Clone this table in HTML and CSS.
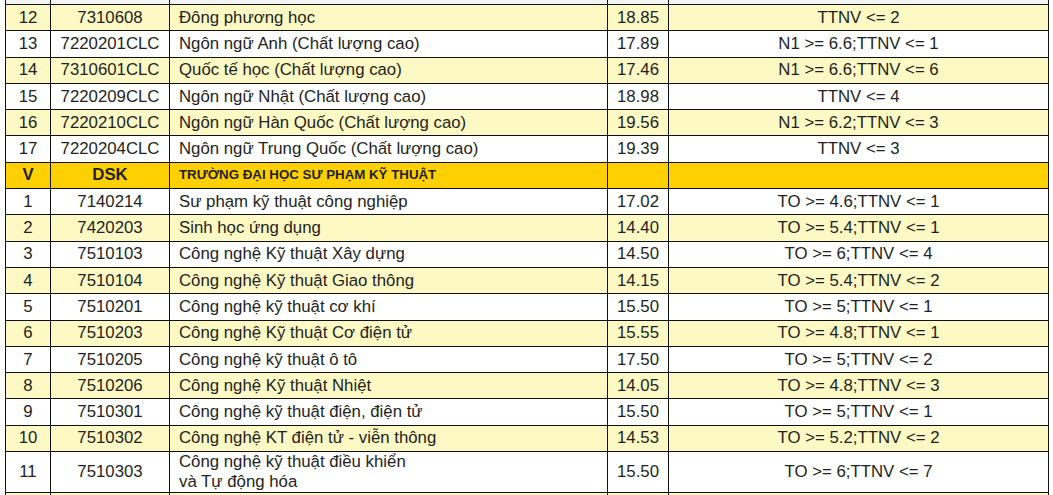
FILE: index.html
```html
<!DOCTYPE html>
<html lang="vi">
<head>
<meta charset="utf-8">
<link rel="stylesheet" href="styles.css">
</head>
<body>
<div class="wrap">
<table class="grid">
<colgroup>
<col class="c1"><col class="c2"><col class="c3"><col class="c4"><col class="c5">
</colgroup>
<tbody>
<tr class="cut"><td></td><td></td><td></td><td></td><td></td></tr>
<tr class="y"><td>12</td><td>7310608</td><td class="name">Đông phương học</td><td>18.85</td><td>TTNV &lt;= 2</td></tr>
<tr><td>13</td><td>7220201CLC</td><td class="name">Ngôn ngữ Anh (Chất lượng cao)</td><td>17.89</td><td>N1 &gt;= 6.6;TTNV &lt;= 1</td></tr>
<tr class="y"><td>14</td><td>7310601CLC</td><td class="name">Quốc tế học (Chất lượng cao)</td><td>17.46</td><td>N1 &gt;= 6.6;TTNV &lt;= 6</td></tr>
<tr><td>15</td><td>7220209CLC</td><td class="name">Ngôn ngữ Nhật (Chất lượng cao)</td><td>18.98</td><td>TTNV &lt;= 4</td></tr>
<tr class="y"><td>16</td><td>7220210CLC</td><td class="name">Ngôn ngữ Hàn Quốc (Chất lượng cao)</td><td>19.56</td><td>N1 &gt;= 6.2;TTNV &lt;= 3</td></tr>
<tr><td>17</td><td>7220204CLC</td><td class="name">Ngôn ngữ Trung Quốc (Chất lượng cao)</td><td>19.39</td><td>TTNV &lt;= 3</td></tr>
<tr class="head"><td>V</td><td>DSK</td><td class="name school">TRƯỜNG ĐẠI HỌC SƯ PHẠM KỸ THUẬT</td><td></td><td></td></tr>
<tr><td>1</td><td>7140214</td><td class="name">Sư phạm kỹ thuật công nghiệp</td><td>17.02</td><td>TO &gt;= 4.6;TTNV &lt;= 1</td></tr>
<tr class="y"><td>2</td><td>7420203</td><td class="name">Sinh học ứng dụng</td><td>14.40</td><td>TO &gt;= 5.4;TTNV &lt;= 1</td></tr>
<tr><td>3</td><td>7510103</td><td class="name">Công nghệ Kỹ thuật Xây dựng</td><td>14.50</td><td>TO &gt;= 6;TTNV &lt;= 4</td></tr>
<tr class="y"><td>4</td><td>7510104</td><td class="name">Công nghệ Kỹ thuật Giao thông</td><td>14.15</td><td>TO &gt;= 5.4;TTNV &lt;= 2</td></tr>
<tr><td>5</td><td>7510201</td><td class="name">Công nghệ kỹ thuật cơ khí</td><td>15.50</td><td>TO &gt;= 5;TTNV &lt;= 1</td></tr>
<tr class="y"><td>6</td><td>7510203</td><td class="name">Công nghệ Kỹ thuật Cơ điện tử</td><td>15.55</td><td>TO &gt;= 4.8;TTNV &lt;= 1</td></tr>
<tr><td>7</td><td>7510205</td><td class="name">Công nghệ kỹ thuật ô tô</td><td>17.50</td><td>TO &gt;= 5;TTNV &lt;= 2</td></tr>
<tr class="y"><td>8</td><td>7510206</td><td class="name">Công nghệ Kỹ thuật Nhiệt</td><td>14.05</td><td>TO &gt;= 4.8;TTNV &lt;= 3</td></tr>
<tr><td>9</td><td>7510301</td><td class="name">Công nghệ kỹ thuật điện, điện tử</td><td>15.50</td><td>TO &gt;= 5;TTNV &lt;= 1</td></tr>
<tr class="y"><td>10</td><td>7510302</td><td class="name">Công nghệ KT điện tử - viễn thông</td><td>14.53</td><td>TO &gt;= 5.2;TTNV &lt;= 2</td></tr>
<tr class="tall"><td>11</td><td>7510303</td><td class="name">Công nghệ kỹ thuật điều khiển<br>và Tự động hóa</td><td>15.50</td><td>TO &gt;= 6;TTNV &lt;= 7</td></tr>
<tr class="y"><td></td><td></td><td></td><td></td><td></td></tr>
</tbody>
</table>
</div>
</body>
</html>
```

FILE: styles.css
```css
html, body {
  margin: 0;
  padding: 0;
  background: #ffffff;
}
.wrap {
  height: 495px;
  overflow: hidden;
  padding-left: 5px;
}
.grid {
  border-collapse: collapse;
  table-layout: fixed;
  width: 1043px;
  font-family: "Liberation Sans", Arial, sans-serif;
  font-size: 16.8px;
  color: #231f20;
  margin-top: -1px;
}
.c1 { width: 45px; }
.c2 { width: 119px; }
.c3 { width: 438px; }
.c4 { width: 61px; }
.c5 { width: 380px; }
.grid td {
  border: 1px solid #111;
  height: 25.3px;
  padding: 0;
  text-align: center;
  vertical-align: middle;
  line-height: 20px;
  white-space: nowrap;
  overflow: hidden;
}
.grid td.name {
  text-align: left;
  padding-left: 9px;
}
.grid tr.cut td {
  height: 4px;
  background: #f3f3f3;
}
.grid tr.y td {
  background: #fdf9c4;
}
.grid tr.head td {
  background: #ffd000;
  font-weight: bold;
}
.grid td.school {
  font-size: 13.3px;
}
.grid tr.tall td {
  height: 40px;
}
```
